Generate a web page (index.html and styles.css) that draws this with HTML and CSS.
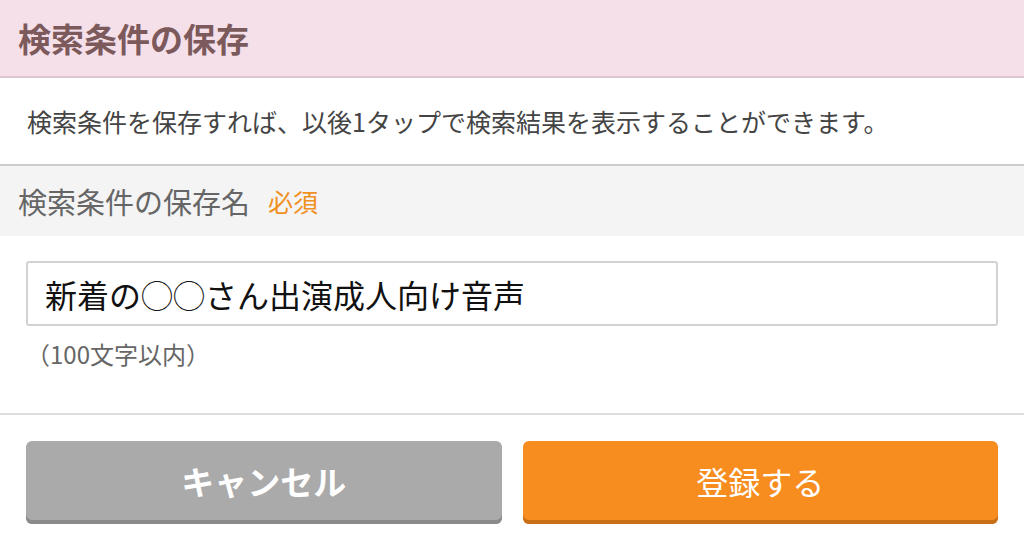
FILE: index.html
```html
<!DOCTYPE html>
<html lang="ja">
<head>
<meta charset="utf-8">
<title>検索条件の保存</title>
<link rel="stylesheet" href="styles.css">
</head>
<body>
<div class="page">
  <header class="header">検索条件の保存</header>
  <div class="desc">検索条件を保存すれば、以後1タップで検索結果を表示することができます。</div>
  <div class="field-label">検索条件の保存名<span class="required">必須</span></div>
  <div class="field-body">
    <div class="input">新着の◯◯さん出演成人向け音声</div>
    <div class="note">（100文字以内）</div>
  </div>
  <div class="actions">
    <button class="btn btn-cancel">キャンセル</button>
    <button class="btn btn-submit">登録する</button>
  </div>
</div>
</body>
</html>
```
FILE: styles.css
```css
* { box-sizing: border-box; }
html, body { margin: 0; padding: 0; background: #fff; }
body {
  font-family: "Noto Sans CJK JP", "Noto Sans", sans-serif;
  width: 1024px;
  height: 550px;
  overflow: hidden;
}
.header {
  height: 78px;
  background: #f5e0ea;
  border-bottom: 2px solid #dcc6d0;
  padding-left: 18px;
  display: flex;
  align-items: center;
  font-size: 33px;
  font-weight: bold;
  color: #7c5a5c;
}
.desc {
  height: 88px;
  border-bottom: 2px solid #cccccc;
  padding-left: 27px;
  display: flex;
  align-items: center;
  font-size: 25px;
  color: #444;
}
.field-label {
  height: 70px;
  background: #f4f4f4;
  padding-left: 18px;
  display: flex;
  align-items: center;
  font-size: 29px;
  color: #666;
}
.required {
  margin-left: 18px;
  font-size: 25px;
  color: #f0901e;
}
.field-body {
  padding: 25px 26px 0;
  height: 179px;
  border-bottom: 2px solid #dddddd;
}
.input {
  height: 65px;
  border: 2px solid #d2d2d2;
  border-radius: 3px;
  padding-left: 17px;
  display: flex;
  align-items: center;
  font-size: 32px;
  color: #111;
}
.note {
  margin-top: 10px;
  font-size: 24px;
  line-height: 36px;
  color: #666;
}
.actions {
  display: flex;
  gap: 21px;
  padding: 26px 26px;
}
.btn {
  flex: 1;
  height: 83px;
  border: none;
  border-radius: 6px;
  font-family: inherit;
  font-size: 32px;
  color: #fff;
  padding: 0 0 4px;
}
.btn-cancel {
  background: #aaaaaa;
  box-shadow: inset 0 -4px 0 #8a8a8a;
  font-weight: bold;
  font-size: 33px;
}
.btn-submit {
  background: #f78d1f;
  box-shadow: inset 0 -4px 0 #c66f17;
}
```
